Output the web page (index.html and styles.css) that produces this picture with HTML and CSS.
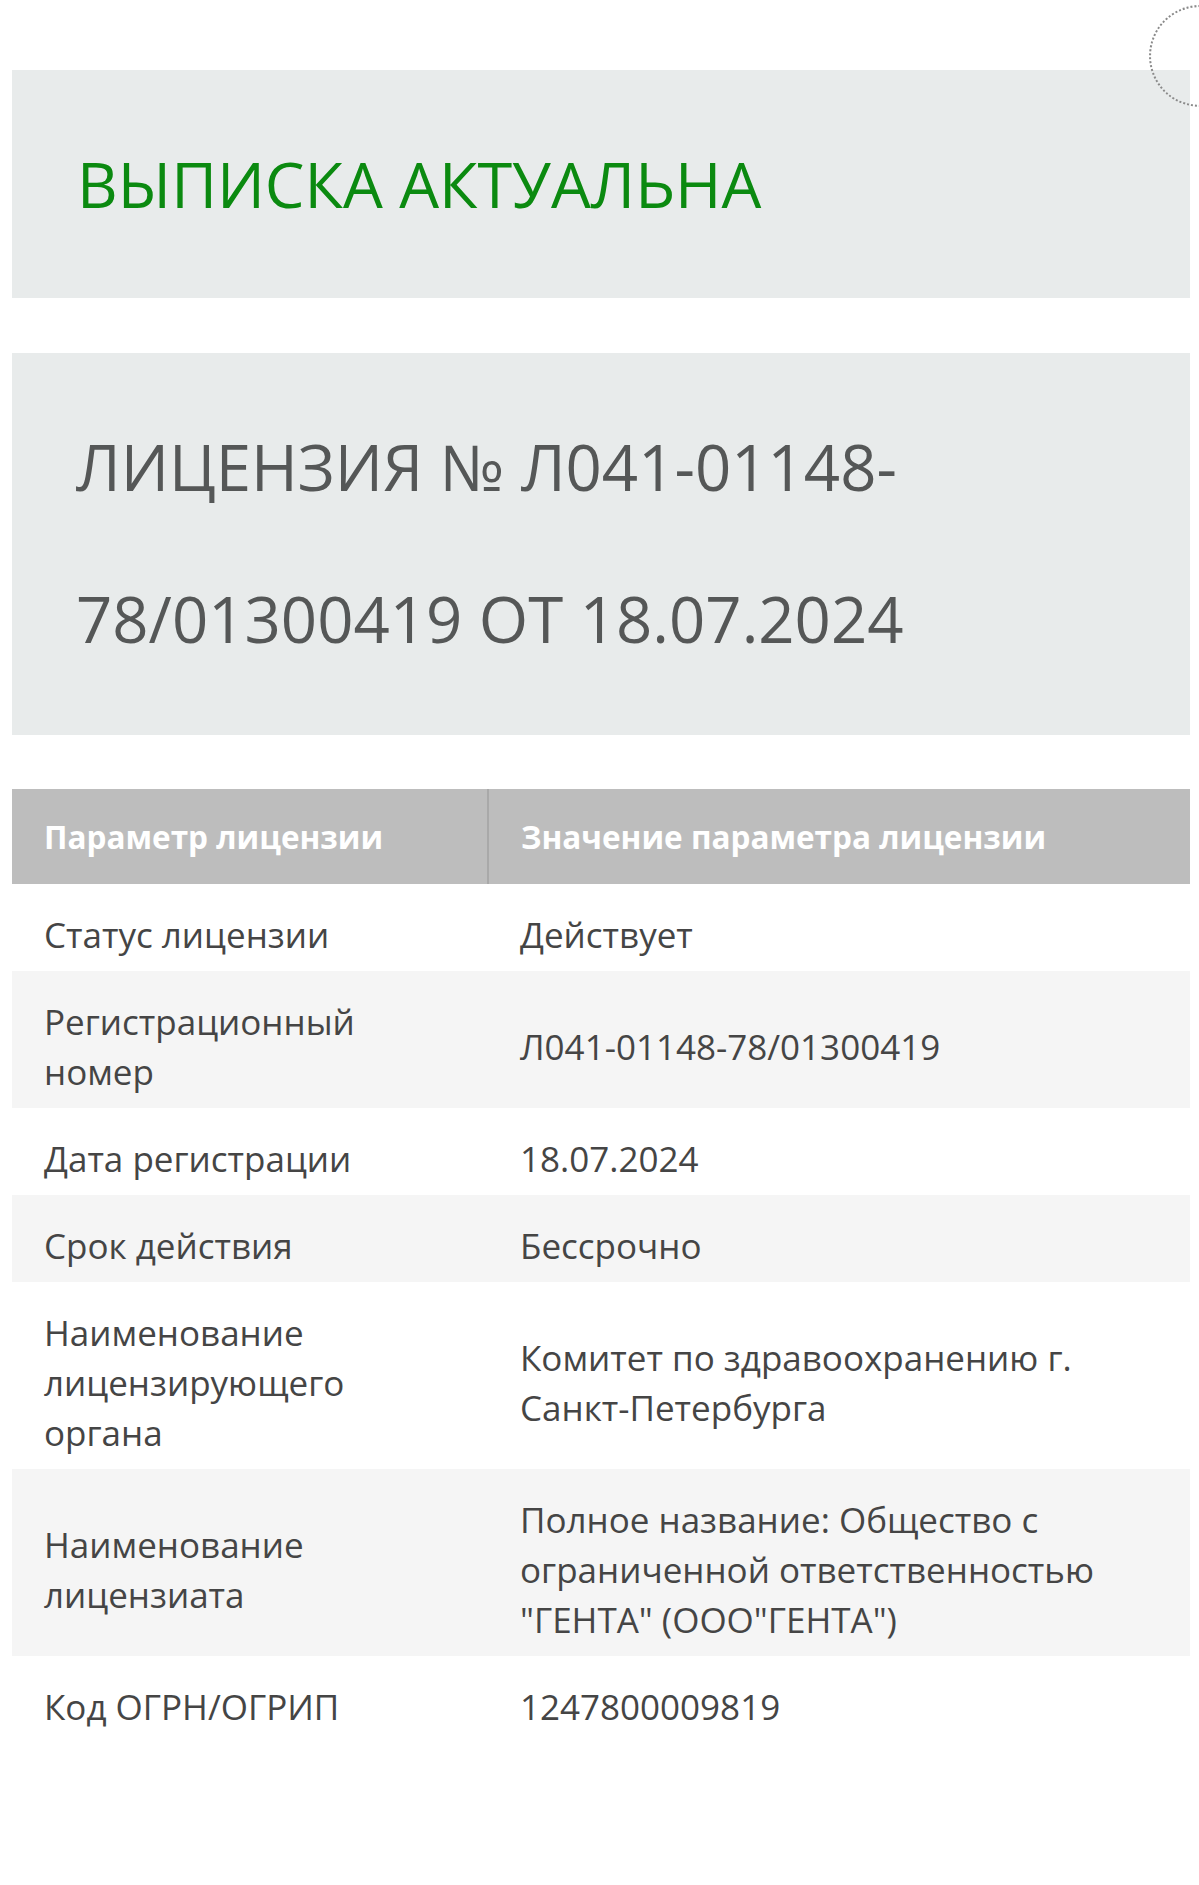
FILE: index.html
```html
<!DOCTYPE html>
<html lang="ru">
<head>
<meta charset="utf-8">
<title>Выписка</title>
<link rel="stylesheet" href="styles.css">
</head>
<body>
<div class="page">
  <span class="spinner"></span>
  <div class="banner status">ВЫПИСКА АКТУАЛЬНА</div>
  <div class="banner license">ЛИЦЕНЗИЯ № Л041-01148-<br>78/01300419 ОТ 18.07.2024</div>
  <table class="params">
    <thead>
      <tr><th>Параметр лицензии</th><th>Значение параметра лицензии</th></tr>
    </thead>
    <tbody>
      <tr><td>Статус лицензии</td><td>Действует</td></tr>
      <tr><td>Регистрационный<br>номер</td><td>Л041-01148-78/01300419</td></tr>
      <tr><td>Дата регистрации</td><td>18.07.2024</td></tr>
      <tr><td>Срок действия</td><td>Бессрочно</td></tr>
      <tr><td>Наименование<br>лицензирующего<br>органа</td><td>Комитет по здравоохранению г.<br>Санкт-Петербурга</td></tr>
      <tr><td>Наименование<br>лицензиата</td><td>Полное название: Общество с<br>ограниченной ответственностью<br>"ГЕНТА" (ООО"ГЕНТА")</td></tr>
      <tr><td>Код ОГРН/ОГРИП</td><td>1247800009819</td></tr>
    </tbody>
  </table>
</div>
</body>
</html>
```
FILE: styles.css
```css
html, body {
  margin: 0;
  padding: 0;
  background: #ffffff;
}
body {
  font-family: "Open Sans", "Noto Sans", sans-serif;
  color: #444444;
}
.page {
  position: relative;
  padding: 70px 9px 0 12px;
  height: 1885px;
  box-sizing: border-box;
  overflow: hidden;
}
.spinner {
  position: absolute;
  left: 1149px;
  top: 5px;
  width: 102px;
  height: 102px;
  border: 2px dotted #8a8a8a;
  border-radius: 50%;
  box-sizing: border-box;
}
.banner {
  background: #e8ebeb;
  padding: 38px 64px;
  line-height: 152px;
  font-weight: 400;
  white-space: nowrap;
}
.status {
  color: #0b8a10;
  font-size: 63px;
  height: 228px;
  box-sizing: border-box;
  padding-left: 65px;
}
.license {
  margin-top: 55px;
  color: #555757;
  font-size: 63.5px;
  height: 382px;
  box-sizing: border-box;
}
.params {
  margin-top: 54px;
  width: 100%;
  border-collapse: collapse;
  font-size: 35px;
}
.params th {
  background: #bdbdbd;
  color: #ffffff;
  font-weight: 700;
  font-size: 31.5px;
  text-align: left;
  height: 95px;
  padding: 0 32px;
  box-sizing: border-box;
}
.params th:first-child {
  width: 476px;
  border-right: 2px solid #a9a9a9;
}
.params td {
  padding: 26px 32px 11px;
  line-height: 50px;
  vertical-align: middle;
  color: #454545;
}
.params tbody tr:nth-child(even) td {
  background: #f5f5f5;
}
```
